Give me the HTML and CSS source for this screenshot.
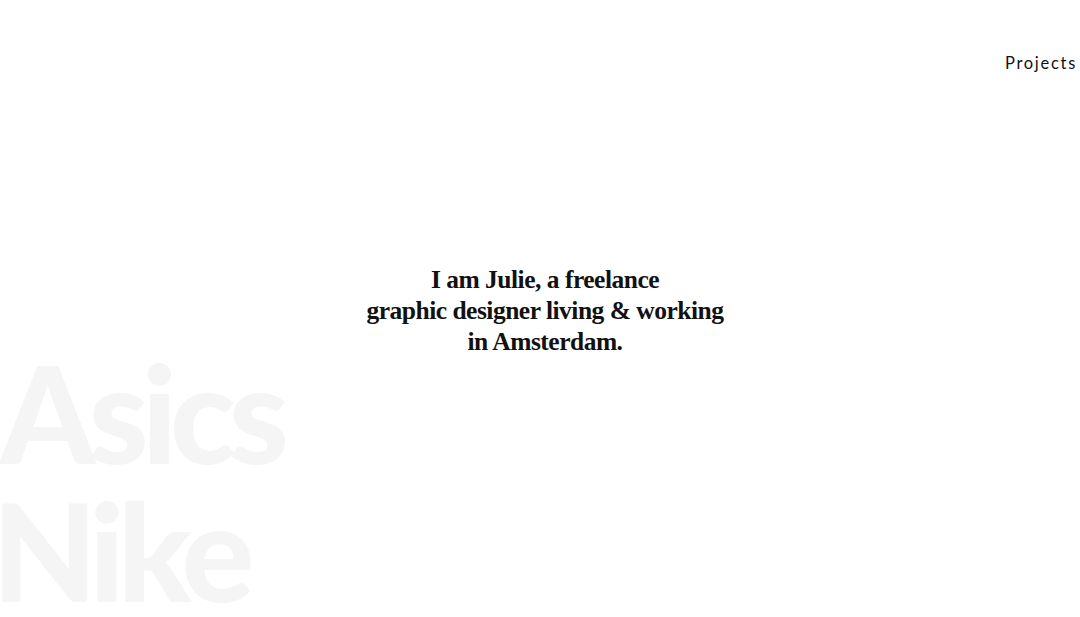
FILE: index.html
```html
<!DOCTYPE html>
<html lang="en">
<head>
<meta charset="utf-8">
<title>Julie — Graphic Designer</title>
<link rel="stylesheet" href="styles.css">
</head>
<body>
<div class="page">
  <ul class="projects-bg">
    <li>Asics</li>
    <li class="tight">Nike</li>
  </ul>
  <div class="layer">
    <header class="top">
      <a class="nav-link" href="#">Projects</a>
    </header>
    <main class="hero">
      <h1 class="intro">I am Julie, a freelance<br>graphic designer living &amp; working<br>in Amsterdam.</h1>
    </main>
  </div>
</div>
</body>
</html>
```
FILE: styles.css
```css
html, body {
  margin: 0;
  padding: 0;
  background: #ffffff;
}
.page {
  display: grid;
  width: 1080px;
  height: 617px;
  overflow: hidden;
}
.projects-bg, .layer {
  grid-area: 1 / 1;
}
.projects-bg {
  list-style: none;
  margin: 0 0 -2px 0;
  padding: 0;
  align-self: end;
  font-family: "Lato", sans-serif;
  font-weight: 900;
  font-size: 136px;
  line-height: 138px;
  letter-spacing: -7px;
  color: #f6f5f5;
}
.projects-bg .tight {
  margin-left: -8px;
}
.layer {
  display: flex;
  flex-direction: column;
}
.top {
  display: flex;
  justify-content: flex-end;
  padding: 53px 3px 0 0;
}
.nav-link {
  font-family: "Lato", sans-serif;
  font-size: 16.5px;
  letter-spacing: 1.7px;
  color: #111;
  text-decoration: none;
}
.hero {
  flex: 1;
  display: flex;
  align-items: center;
  justify-content: center;
  padding-left: 10px;
}
.intro {
  margin: 0 0 70px 0;
  text-align: center;
  font-family: "Liberation Serif", serif;
  font-weight: 700;
  font-size: 25.5px;
  line-height: 31px;
  letter-spacing: -0.5px;
  color: #111;
}
```
